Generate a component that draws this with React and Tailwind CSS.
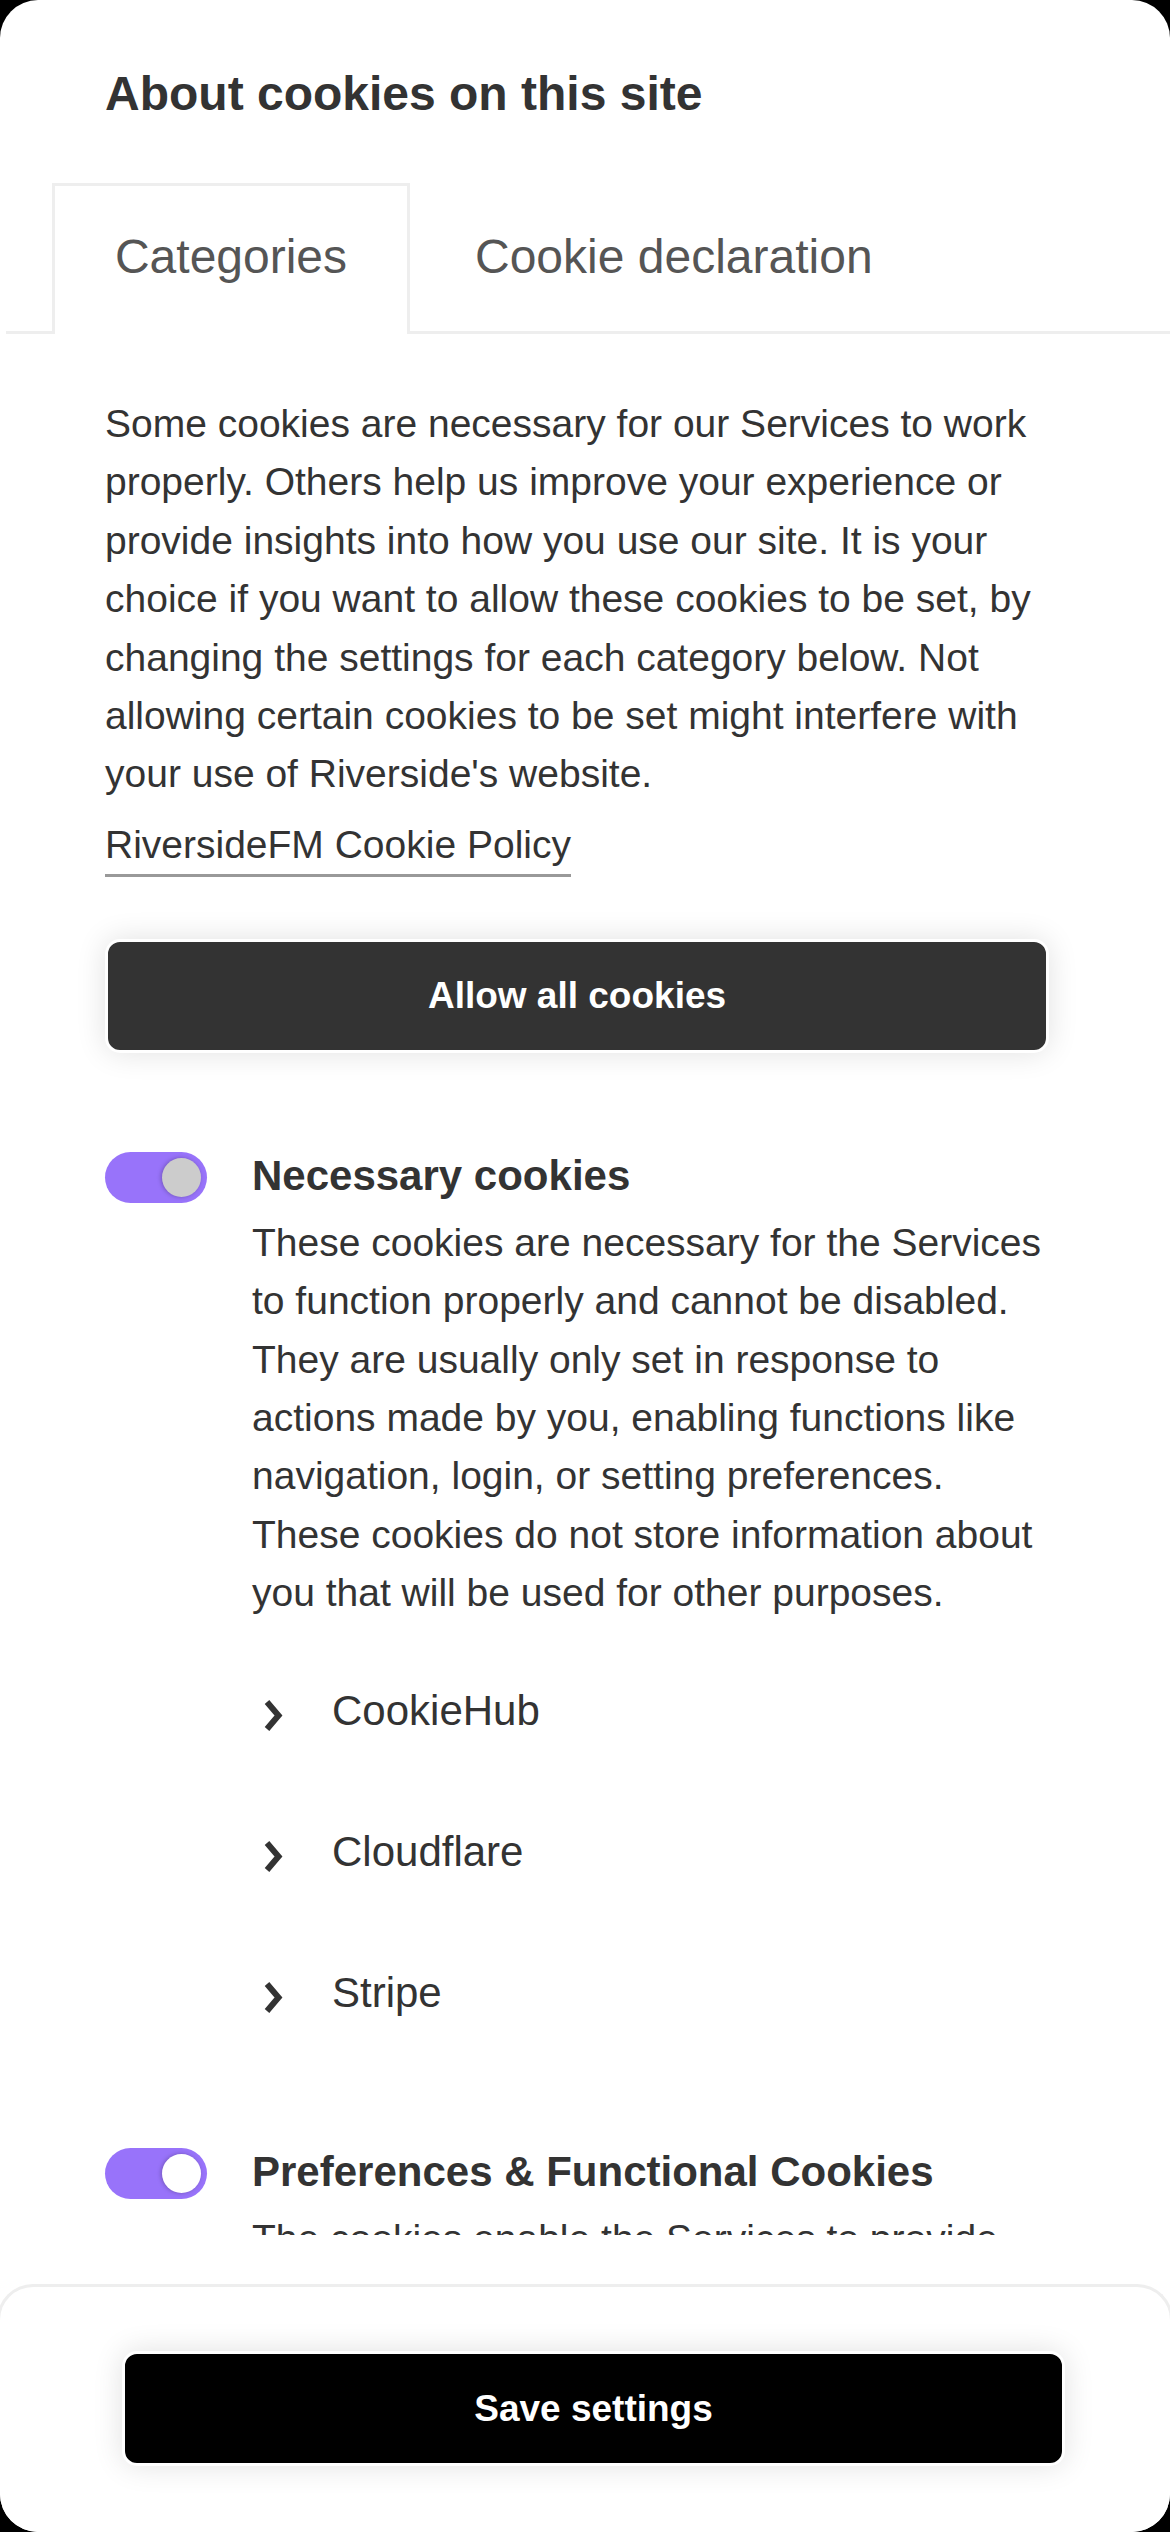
import React from "react";

const Toggle = ({ knob }) => (
  <div className="relative w-[102px] h-[51px] shrink-0 rounded-full bg-[#9873fa]">
    <div
      className={
        "absolute right-[6px] top-[6px] w-[39px] h-[39px] rounded-full shadow-[-1px_0_4px_rgba(0,0,0,0.25)] " +
        knob
      }
    />
  </div>
);

const Chevron = () => (
  <svg
    width="20"
    height="33"
    viewBox="0 0 20 33"
    className="ml-[11px] mt-[12px] shrink-0"
  >
    <polyline
      points="4,3 15.5,16.5 4,30"
      fill="none"
      stroke="#333333"
      strokeWidth="6"
      strokeLinejoin="miter"
      strokeLinecap="butt"
    />
  </svg>
);

const Item = ({ label }) => (
  <div className="flex items-start">
    <Chevron />
    <span className="ml-[49px] text-[42px] leading-[48px] text-[#333333]">
      {label}
    </span>
  </div>
);

const Lines = ({ lines }) =>
  lines.map((l, i) => (
    <span key={i} className="block whitespace-nowrap">
      {l}
    </span>
  ));

export default function App() {
  return (
    <div
      className="w-[1170px] h-[2532px] bg-black"
      style={{ fontFamily: '"Liberation Sans", Arial, sans-serif' }}
    >
      <div className="w-full h-full bg-white rounded-[38px] overflow-hidden flex flex-col">
        <div className="h-[2235px] shrink-0 overflow-hidden">
          <h1 className="pt-[66px] pl-[105px] text-[48px] leading-[55px] font-bold text-[#333333]">
            About cookies on this site
          </h1>

          <div className="mt-[62px] ml-[6px] flex border-b-[3px] border-[#eeeeee]">
            <div className="ml-[46px] w-[358px] mb-[-3px] bg-white border-t-[3px] border-x-[3px] border-[#eeeeee] pt-[43px] pb-[50px] text-center text-[48px] leading-[55px] text-[#555555]">
              Categories
            </div>
            <div className="pl-[65px] pt-[46px] text-[48px] leading-[55px] text-[#555555]">
              Cookie declaration
            </div>
          </div>

          <div className="mt-[61px] px-[105px] text-[39px] leading-[58.4px] text-[#333333]">
            <Lines
              lines={[
                "Some cookies are necessary for our Services to work",
                "properly. Others help us improve your experience or",
                "provide insights into how you use our site. It is your",
                "choice if you want to allow these cookies to be set, by",
                "changing the settings for each category below. Not",
                "allowing certain cookies to be set might interfere with",
                "your use of Riverside's website.",
              ]}
            />
          </div>

          <div className="mt-[18px] px-[105px]">
            <a className="inline-block text-[39px] leading-[46px] pb-[6px] border-b-[3px] border-[#999999] text-[#333333]">
              RiversideFM Cookie Policy
            </a>
          </div>

          <button className="mt-[62px] ml-[105px] w-[944px] h-[114px] flex items-center justify-center rounded-[15px] border-[3px] border-white bg-[#333333] shadow-[0_0_30px_rgba(0,0,0,0.12)] text-white text-[37px] font-bold">
            Allow all cookies
          </button>

          <div className="mt-[99px] pl-[105px] flex gap-[45px]">
            <Toggle knob="bg-[#cccccc]" />
            <div className="w-[813px]">
              <h2 className="pt-[3px] text-[42px] leading-[42px] font-bold text-[#333333]">
                Necessary cookies
              </h2>
              <div className="mt-[17px] text-[39px] leading-[58.4px] text-[#333333]">
                <Lines
                  lines={[
                    "These cookies are necessary for the Services",
                    "to function properly and cannot be disabled.",
                    "They are usually only set in response to",
                    "actions made by you, enabling functions like",
                    "navigation, login, or setting preferences.",
                    "These cookies do not store information about",
                    "you that will be used for other purposes.",
                  ]}
                />
              </div>
              <div className="mt-[64px] flex flex-col gap-[93px]">
                <Item label="CookieHub" />
                <Item label="Cloudflare" />
                <Item label="Stripe" />
              </div>
            </div>
          </div>

          <div className="mt-[131px] pl-[105px] flex gap-[45px]">
            <Toggle knob="bg-white" />
            <div className="w-[813px]">
              <h2 className="pt-[3px] text-[42px] leading-[42px] font-bold text-[#333333]">
                Preferences &amp; Functional Cookies
              </h2>
              <div className="mt-[17px] text-[39px] leading-[58.4px] text-[#333333]">
                <Lines
                  lines={[
                    "The cookies enable the Services to provide",
                    "enhanced functionality and personalisation.",
                  ]}
                />
              </div>
            </div>
          </div>
        </div>

        <div className="mt-[49px] mx-[-3px] flex-1 bg-white border-t-[3px] border-x-[3px] border-[#eeeeee] rounded-t-[36px] pt-[64px]">
          <button className="ml-[122px] w-[943px] h-[115px] flex items-center justify-center rounded-[15px] border-[3px] border-white bg-black shadow-[0_0_30px_rgba(0,0,0,0.12)] text-white text-[37px] font-bold">
            Save settings
          </button>
        </div>
      </div>
    </div>
  );
}
